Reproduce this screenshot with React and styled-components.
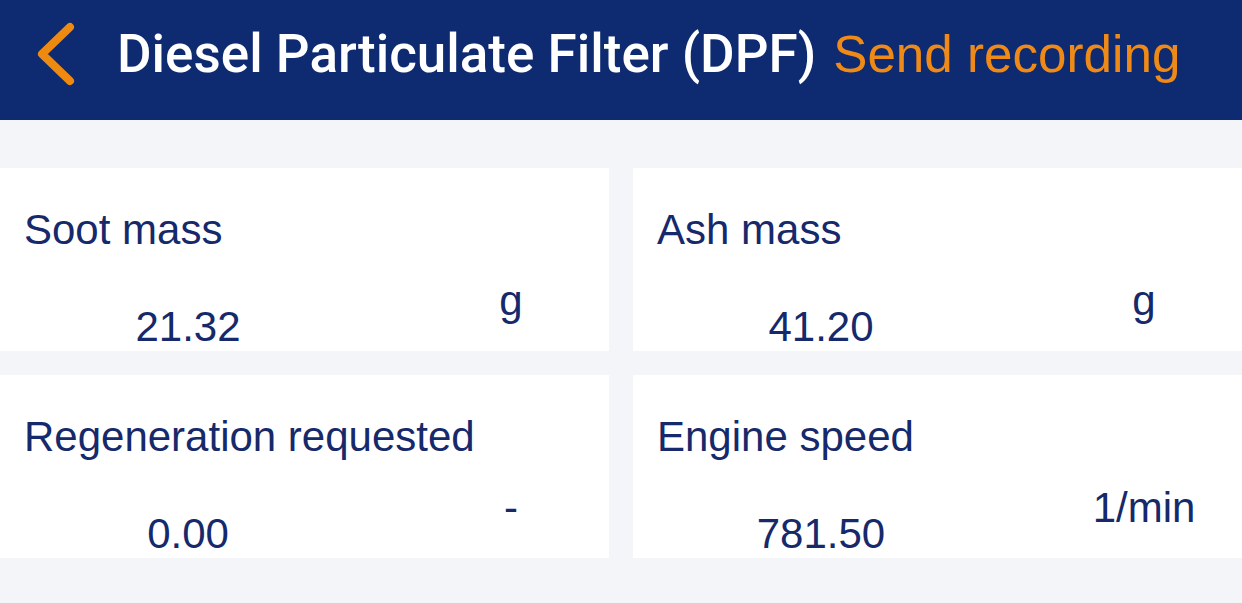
import styled, { createGlobalStyle } from "styled-components";

const GlobalStyle = createGlobalStyle`
  html, body {
    margin: 0;
    padding: 0;
    background: #f4f5f9;
  }
  body {
    font-family: "Liberation Sans", Arial, sans-serif;
  }
`;

const Page = styled.div`
  width: 1242px;
  height: 603px;
  overflow: hidden;
  background: #f4f5f9;
`;

const Header = styled.header`
  display: flex;
  align-items: flex-start;
  height: 120px;
  box-sizing: border-box;
  padding: 22px 0 0 36px;
  background: #0e2a71;
`;

const BackButton = styled.button`
  display: block;
  width: 40px;
  height: 64px;
  padding: 0;
  border: 0;
  background: none;
  cursor: pointer;
`;

const Title = styled.h1`
  margin: 2px 0 0 41px;
  font-family: Roboto, "Noto Sans", sans-serif;
  font-weight: 500;
  font-size: 53px;
  line-height: 60px;
  color: #ffffff;
  white-space: nowrap;
`;

const Action = styled.a`
  margin: 3px 0 0 17px;
  font-family: "Liberation Sans", Arial, sans-serif;
  font-size: 51.2px;
  line-height: 60px;
  color: #f08a17;
  white-space: nowrap;
  cursor: pointer;
`;

const Grid = styled.main`
  display: grid;
  grid-template-columns: 609px 609px;
  grid-auto-rows: 183px;
  column-gap: 24px;
  row-gap: 24px;
  padding-top: 48px;
`;

const Card = styled.section`
  display: grid;
  grid-template-columns: 376px 1fr;
  grid-template-rows: 48px auto;
  padding-top: 38px;
  box-sizing: border-box;
  overflow: hidden;
  background: #ffffff;
  color: #15296b;
  font-size: 42px;
  line-height: 48px;
`;

const Label = styled.div`
  grid-column: 1 / 3;
  padding-left: 24px;
  white-space: nowrap;
`;

const Value = styled.div`
  padding-top: 49px;
  text-align: center;
`;

const Unit = styled.div`
  padding: 23px 0 0 37px;
  text-align: center;
`;

const readings = [
  { label: "Soot mass", value: "21.32", unit: "g" },
  { label: "Ash mass", value: "41.20", unit: "g" },
  { label: "Regeneration requested", value: "0.00", unit: "-" },
  { label: "Engine speed", value: "781.50", unit: "1/min" },
];

function Chevron() {
  return (
    <svg width="40" height="64" viewBox="0 0 40 64">
      <path
        d="M34 5 L6 32 L34 59"
        fill="none"
        stroke="#ef8a10"
        strokeWidth="8"
        strokeLinecap="round"
        strokeLinejoin="round"
      />
    </svg>
  );
}

export default function App() {
  return (
    <Page>
      <GlobalStyle />
      <Header>
        <BackButton aria-label="Back">
          <Chevron />
        </BackButton>
        <Title>Diesel Particulate Filter (DPF)</Title>
        <Action>Send recording</Action>
      </Header>
      <Grid>
        {readings.map((r) => (
          <Card key={r.label}>
            <Label>{r.label}</Label>
            <Value>{r.value}</Value>
            <Unit>{r.unit}</Unit>
          </Card>
        ))}
      </Grid>
    </Page>
  );
}
